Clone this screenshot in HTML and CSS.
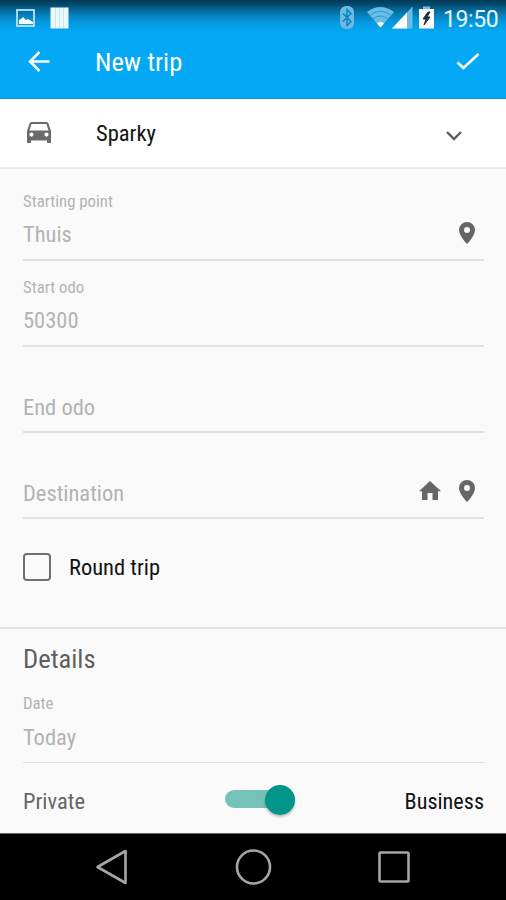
FILE: index.html
```html
<!DOCTYPE html>
<html lang="en">
<head>
<meta charset="utf-8">
<title>New trip</title>
<link rel="stylesheet" href="styles.css">
</head>
<body>
<div class="screen">
  <header class="top">
    <div class="status">
      <svg class="status-left" width="52" height="24" viewBox="0 0 52 24">
        <rect x="1" y="3" width="17" height="16" fill="none" stroke="#b9e2f6" stroke-width="1.800"/>
        <path d="M3 17v-4l2-1 2-2 3 3 2-1 5 3v2z" fill="#fff"/>
        <path d="M34.500 0.500h18v21h-18z" fill="#eef9ff"/>
        <path d="M39.500 1v20M43.500 1v20M47.500 1v20" stroke="#c3e5f5" stroke-width="1"/>
      </svg>
      <svg class="status-right" width="98" height="24" viewBox="0 0 98 24">
        <rect x="-1" y="-1" width="14" height="23" rx="6" fill="#6db9df"/>
        <path d="M2 6.500l8 8-4 4V2.500l4 4-8 8" fill="none" stroke="#0785c0" stroke-width="1.500"/>
        <path d="M26 5Q39-5 53 5L39.500 20.500z" fill="#69bce5"/>
        <path d="M28.500 8.500Q39.500 0 50.500 8.500M32 12Q39.500 6 47 12" fill="none" stroke="#249cd6" stroke-width="1"/>
        <path d="M36 16.500Q39.500 13.500 43 16.500L39.500 20.500z" fill="#fff"/>
        <path d="M51 21.500L71.500-.5V21.500z" fill="#69bce5"/>
        <path d="M51 21.500L66 5.500V21.500z" fill="#fff"/>
        <path d="M78 2h15v19.500H78z" fill="#fff"/>
        <path d="M82-.5h7V2h-7z" fill="#78bde0"/>
        <path d="M87 5l-5 7h3l-2 6 6-8h-3l3-5z" fill="#20313b" stroke="#20313b"/>
      </svg>
      <span class="clock">19:50</span>
    </div>
    <div class="appbar">
      <svg class="back" width="24" height="24" viewBox="0 0 24 24"><path d="M22.500 11.500H3.500M12.500 2L3 11.500l9.500 9.500" fill="none" stroke="#fff" stroke-width="2.500"/></svg>
      <h1 class="title">New trip</h1>
      <svg class="check" width="26" height="20" viewBox="0 0 26 20"><path d="M2.500 10.500l6 5.500L23.500 2" fill="none" stroke="#fff" stroke-width="2.600"/></svg>
    </div>
  </header>
  <div class="vehicle">
    <svg class="car" width="26" height="24" viewBox="0 0 26 24"><path fill-rule="evenodd" fill="#6b6b6b" d="M5.500 1h15q1.500 0 2 1.500L25 10v12h-4v-2.500H5V22H1V10l2.500-7.500Q4 1 5.500 1zM5.500 3L3.500 9.500h19L20.500 3zM5.500 11.500a2.100 2.100 0 1 0 0 4.200 2.100 2.100 0 0 0 0-4.200zm15 0a2.100 2.100 0 1 0 0 4.200 2.100 2.100 0 0 0 0-4.200z"/></svg>
    <span class="vehicle-name">Sparky</span>
    <svg class="chevron" width="18" height="12" viewBox="0 0 18 12"><path d="M2 2l7 7 7-7" fill="none" stroke="#5c5c5c" stroke-width="2.400"/></svg>
  </div>
  <main class="form">
    <div class="field field-start">
      <label class="label">Starting point</label>
      <div class="row"><span class="value">Thuis</span>
        <svg class="pin" width="18" height="24" viewBox="0 0 18 24"><path fill-rule="evenodd" fill="#666" d="M9 0a8 8 0 0 0-8 8c0 6 8 14 8 14s8-8 8-14a8 8 0 0 0-8-8zm0 5a3 3 0 1 1 0 6 3 3 0 0 1 0-6z"/></svg>
      </div>
    </div>
    <div class="field">
      <label class="label">Start odo</label>
      <div class="row"><span class="value">50300</span></div>
    </div>
    <div class="field">
      <div class="row row-hint"><span class="value">End odo</span></div>
    </div>
    <div class="field field-dest">
      <div class="row row-hint"><span class="value">Destination</span>
        <svg class="home" width="22" height="20" viewBox="0 0 22 20"><path fill="#666" d="M11 0L0 10.300h3V19h5.500v-7h5v7H19v-8.700h3z"/></svg>
        <svg class="pin" width="18" height="24" viewBox="0 0 18 24"><path fill-rule="evenodd" fill="#666" d="M9 1a8 8 0 0 0-8 8c0 6 8 14 8 14s8-8 8-14a8 8 0 0 0-8-8zm0 5a3 3 0 1 1 0 6 3 3 0 0 1 0-6z"/></svg>
      </div>
    </div>
    <div class="round"><span class="box"></span><span class="round-text">Round trip</span></div>
  </main>
  <section class="details">
    <h2 class="heading">Details</h2>
    <div class="field field-date">
      <label class="label">Date</label>
      <div class="row"><span class="value">Today</span></div>
    </div>
    <div class="kind">
      <span class="private">Private</span>
      <span class="switch"><span class="thumb"></span></span>
      <span class="business">Business</span>
    </div>
  </section>
  <nav class="nav">
    <svg width="34" height="38" viewBox="0 0 34 38"><path d="M30.500 3v32L2.500 19z" fill="none" stroke="#a5a5a5" stroke-width="2.600" stroke-linejoin="round"/></svg>
    <svg width="38" height="38" viewBox="0 0 38 38"><circle cx="19.500" cy="19" r="16.500" fill="none" stroke="#a5a5a5" stroke-width="2.600"/></svg>
    <svg width="32" height="32" viewBox="0 0 32 32"><rect x="1.500" y="1.500" width="29" height="29" rx="1" fill="none" stroke="#a5a5a5" stroke-width="2.600"/></svg>
  </nav>
</div>
</body>
</html>
```
FILE: styles.css
```css
* { box-sizing: border-box; margin: 0; }
body { background: #fafafa; font-family: "Roboto Condensed", Roboto, sans-serif; font-stretch: 75%; font-size: 22.5px; color: #111; }
svg { display: block; flex: none; }
span, h1, h2, label { white-space: nowrap; font-weight: 400; }
.screen { width: 506px; height: 900px; display: flex; flex-direction: column; overflow: hidden; }
.top { height: 99px; background: linear-gradient(#033a53 0, #04486a 4px, #0578ae 13px, #0498df 22px, #04a8f4 32px); border-bottom: 1px solid #0993d5; color: #fff; }
.status { height: 38px; display: flex; align-items: flex-start; padding: 7px 8px 0 16px; }
.status-right { margin-left: auto; overflow: visible; }
.status-left { overflow: visible; }
.clock { font-family: Roboto, sans-serif; font-stretch: 100%; font-size: 23px; line-height: 26px; letter-spacing: -0.4px; width: 55px; margin-left: 4px; color: #e4f5fd; }
.appbar { height: 48px; display: flex; align-items: center; padding: 0 25px 0 27px; }
.title { font-size: 26.5px; line-height: 36px; margin-left: 44px; }
.check { margin-left: auto; }
.vehicle { height: 70px; background: #fff; border-bottom: 2px solid #ebebeb; display: flex; align-items: center; padding: 0 43px 0 26px; }
.vehicle-name { margin-left: 44px; padding-top: 1px; }
.chevron { margin: 7px 0 0 auto; }
.form { height: 461px; padding: 20px 22px 0 23px; border-bottom: 2px solid #e2e2e2; }
.field { height: 86px; border-bottom: 2px solid #e0e0e0; color: #b3b3b3; }
.field-start { height: 72px; }
.form .field + .field { padding-top: 14px; }
.label { display: block; font-size: 16.8px; line-height: 25px; }
.row { display: flex; align-items: center; height: 42px; padding-right: 8px; }
.value { padding-bottom: 1px; }
.row-hint { margin-top: 26px; }
.row .pin { margin: -1px 0 0 auto; }
.row .home { margin: -5px 0 0 auto; }
.row .home + .pin { margin: -6px 0 0 17px; }
.round { display: flex; align-items: center; margin-top: 33px; height: 30px; color: #111; }
.box { width: 28px; height: 28px; border: 2.500px solid #707070; border-radius: 4px; }
.round-text { margin-left: 18px; padding-top: 1px; }
.details { height: 204px; padding: 12px 22px 0 23px; }
.heading { font-size: 26.600px; line-height: 36px; color: #5f5f5f; }
.field-date { height: 86px; padding-top: 14px; border-bottom-width: 1px; }
.kind { height: 70px; display: grid; grid-template-columns: 202px 70px 1fr; align-items: center; padding-top: 7px; }
.private, .business { margin-top: -2px; }
.private { color: #666; }
.switch { width: 70px; height: 18px; border-radius: 9px; background: #75c2b9; position: relative; margin-top: -5px; }
.thumb { position: absolute; right: 0; top: -5px; width: 30px; height: 30px; border-radius: 50%; background: #009688; box-shadow: 0 2px 3px rgba(0,0,0,.25); }
.business { text-align: right; font-size: 22.2px; }
.nav { height: 67px; background: #000; display: grid; grid-template-columns: 141px 141px 141px; justify-content: center; justify-items: center; align-items: center; border-top: 1px solid #666; }
```
